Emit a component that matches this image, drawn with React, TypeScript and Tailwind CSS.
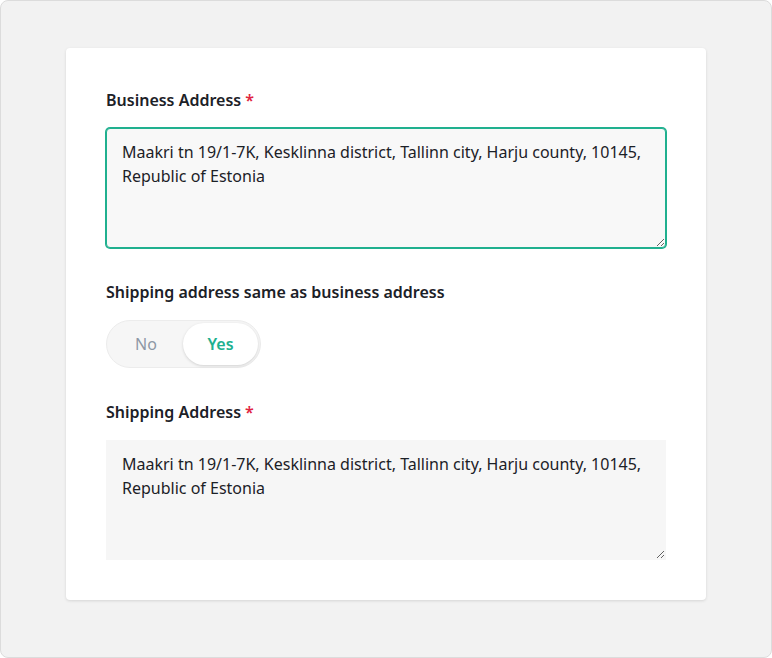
import { useEffect, useRef, useState } from 'react';

const ADDRESS =
  'Maakri tn 19/1-7K, Kesklinna district, Tallinn city, Harju county, 10145, Republic of Estonia';

function Label({ children, required }: { children: React.ReactNode; required?: boolean }) {
  return (
    <label className="block text-base leading-6 font-semibold text-[#1c2127]">
      {children}
      {required && <span className="ml-1 text-[#e0243f]">*</span>}
    </label>
  );
}

export default function App() {
  const [same, setSame] = useState(true);
  const [business, setBusiness] = useState(ADDRESS);
  const businessRef = useRef<HTMLTextAreaElement | null>(null);

  // Put the caret at the end of the business address, as in the reference.
  useEffect(() => {
    const el = businessRef.current;
    if (!el) return;
    el.focus();
    el.setSelectionRange(el.value.length, el.value.length);
  }, []);

  return (
    <div
      className="flex h-[658px] w-[772px] justify-center rounded-lg border border-[#dcdcdc] bg-[#f2f2f2] pt-[47px]"
      style={{ fontFamily: '"Noto Sans", "Open Sans", sans-serif' }}
    >
      <div className="h-[552px] w-[640px] rounded-[4px] bg-white px-10 pt-10 shadow-[0_1px_3px_rgba(0,0,0,0.12)]">
        <Label required>Business Address</Label>
        <textarea
          ref={businessRef}
          value={business}
          onChange={(e) => setBusiness(e.target.value)}
          className="mt-4 block h-[120px] w-full rounded-[4px] border border-[#20b08f] bg-[#f8f8f8] px-[15px] py-[11px] text-base leading-6 text-[#1c2127] caret-black outline-none ring-1 ring-[#20b08f]"
        />

        <div className="mt-8">
          <Label>Shipping address same as business address</Label>
        </div>
        <div className="mt-4 inline-flex h-12 rounded-full border border-[#ececec] bg-[#f6f6f6] p-[2px]">
          <button
            type="button"
            onClick={() => setSame(false)}
            className={`w-[74px] rounded-full text-base ${
              !same
                ? 'bg-white font-semibold text-[#20b08f] shadow-[0_1px_3px_rgba(0,0,0,0.15)]'
                : 'text-[#8d98a5]'
            }`}
          >
            No
          </button>
          <button
            type="button"
            onClick={() => setSame(true)}
            className={`w-[75px] rounded-full text-base ${
              same
                ? 'bg-white font-semibold text-[#20b08f] shadow-[0_1px_3px_rgba(0,0,0,0.15)]'
                : 'text-[#8d98a5]'
            }`}
          >
            Yes
          </button>
        </div>

        <div className="mt-8">
          <Label required>Shipping Address</Label>
        </div>
        <textarea
          readOnly={same}
          value={same ? business : undefined}
          defaultValue={same ? undefined : ADDRESS}
          className="mt-4 block h-[120px] w-full border border-transparent bg-[#f6f6f6] px-[15px] py-[11px] text-base leading-6 text-[#1c2127] outline-none"
        />
      </div>
    </div>
  );
}
